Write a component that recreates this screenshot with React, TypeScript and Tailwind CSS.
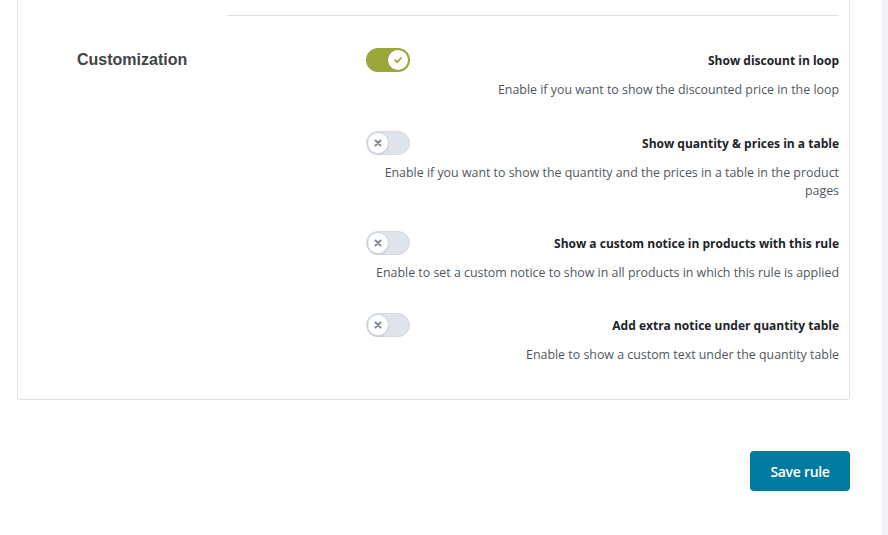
const rows = [
  {
    on: true,
    title: "Show discount in loop",
    desc: ["Enable if you want to show the discounted price in the loop"],
    gap: "mb-[32px]",
  },
  {
    on: false,
    title: "Show quantity & prices in a table",
    desc: ["Enable if you want to show the quantity and the prices in a table in the product", "pages"],
    gap: "mb-[31px]",
  },
  {
    on: false,
    title: "Show a custom notice in products with this rule",
    desc: ["Enable to set a custom notice to show in all products in which this rule is applied"],
    gap: "mb-[31px]",
  },
  {
    on: false,
    title: "Add extra notice under quantity table",
    desc: ["Enable to show a custom text under the quantity table"],
    gap: "",
  },
];

function Toggle({ on }: { on: boolean }) {
  if (on) {
    return (
      <div className="flex h-[24px] w-[44px] items-center justify-end rounded-full bg-[#9ba73a] px-[2px]">
        <div className="flex h-[20px] w-[20px] items-center justify-center rounded-full bg-white">
          <svg width="10" height="10" viewBox="0 0 10 10" fill="none">
            <path d="M2 5.2 L4.2 7.2 L8 3" stroke="#9ba73a" strokeWidth="1.8" strokeLinecap="round" strokeLinejoin="round" />
          </svg>
        </div>
      </div>
    );
  }
  return (
    <div className="flex h-[24px] w-[44px] items-center justify-start rounded-full border border-[#d5dbe4] bg-[#dfe4ec]">
      <div className="flex h-[22px] w-[22px] items-center justify-center rounded-full border border-[#d0d6df] bg-white shadow-[0_1px_1px_rgba(0,0,0,0.08)]">
        <svg width="10" height="10" viewBox="0 0 10 10" fill="none">
          <path d="M2.5 2.5 L7.5 7.5 M7.5 2.5 L2.5 7.5" stroke="#7d8699" strokeWidth="1.9" strokeLinecap="round" />
        </svg>
      </div>
    </div>
  );
}

export default function App() {
  return (
    <div className="flex h-[535px] w-[888px] overflow-hidden bg-white font-['Open_Sans',sans-serif]">
      <div className="w-[882px] pl-[17px]">
        <div className="w-[833px] rounded-b-[4px] border-x border-b border-[#e1e2e4] bg-white">
          <div className="ml-[209px] mr-[10px] h-[16px] border-b border-[#e2e2e2]" />

          <div className="mt-[32px] flex pb-[35px]">
            <div className="w-[348px] pl-[59px] text-[16px] font-bold leading-[24px] text-[#444] font-['Liberation_Sans',Arial,sans-serif]">
              Customization
            </div>
            <div className="flex-1 pr-[10px]">
              {rows.map((r, i) => (
                <div key={i} className={r.gap}>
                  <div className="flex h-[24px] items-center justify-between">
                    <Toggle on={r.on} />
                    <span className="pt-[2px] text-[12px] font-bold text-[#1d2327]">{r.title}</span>
                  </div>
                  <p className="mt-[9px] text-right text-[12.4px] leading-[18px] text-[#50575e]">
                    {r.desc.map((d, j) => (
                      <span key={j}>
                        {d}
                        {j < r.desc.length - 1 && <br />}
                      </span>
                    ))}
                  </p>
                </div>
              ))}
            </div>
          </div>
        </div>

        <div className="mt-[51px] flex w-[833px] justify-end">
          <button className="h-[40px] w-[100px] rounded-[4px] bg-[#007a9e] text-[14px] font-semibold tracking-[-0.3px] text-white">
            Save rule
          </button>
        </div>
      </div>
      <div className="w-[6px] bg-[#f0f2f6]" />
    </div>
  );
}
